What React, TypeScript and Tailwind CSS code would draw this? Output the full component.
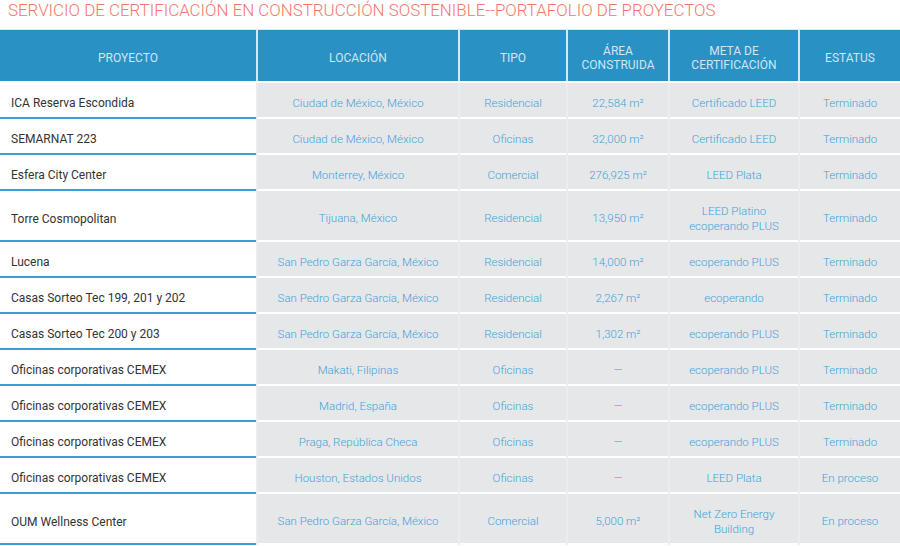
import React from 'react'

type Row = {
  proyecto: string
  locacion: string
  tipo: string
  area: string
  meta: string[]
  estatus: string
  tall?: boolean
}

const rows: Row[] = [
  { proyecto: 'ICA Reserva Escondida', locacion: 'Ciudad de México, México', tipo: 'Residencial', area: '22,584 m²', meta: ['Certificado LEED'], estatus: 'Terminado' },
  { proyecto: 'SEMARNAT 223', locacion: 'Ciudad de México, México', tipo: 'Oficinas', area: '32,000 m²', meta: ['Certificado LEED'], estatus: 'Terminado' },
  { proyecto: 'Esfera City Center', locacion: 'Monterrey, México', tipo: 'Comercial', area: '276,925 m²', meta: ['LEED Plata'], estatus: 'Terminado' },
  { proyecto: 'Torre Cosmopolitan', locacion: 'Tijuana, México', tipo: 'Residencial', area: '13,950 m²', meta: ['LEED Platino', 'ecoperando PLUS'], estatus: 'Terminado', tall: true },
  { proyecto: 'Lucena', locacion: 'San Pedro Garza García, México', tipo: 'Residencial', area: '14,000 m²', meta: ['ecoperando PLUS'], estatus: 'Terminado' },
  { proyecto: 'Casas Sorteo Tec 199, 201 y 202', locacion: 'San Pedro Garza García, México', tipo: 'Residencial', area: '2,267 m²', meta: ['ecoperando'], estatus: 'Terminado' },
  { proyecto: 'Casas Sorteo Tec 200 y 203', locacion: 'San Pedro Garza García, México', tipo: 'Residencial', area: '1,302 m²', meta: ['ecoperando PLUS'], estatus: 'Terminado' },
  { proyecto: 'Oficinas corporativas CEMEX', locacion: 'Makati, Filipinas', tipo: 'Oficinas', area: '—', meta: ['ecoperando PLUS'], estatus: 'Terminado' },
  { proyecto: 'Oficinas corporativas CEMEX', locacion: 'Madrid, España', tipo: 'Oficinas', area: '—', meta: ['ecoperando PLUS'], estatus: 'Terminado' },
  { proyecto: 'Oficinas corporativas CEMEX', locacion: 'Praga, República Checa', tipo: 'Oficinas', area: '—', meta: ['ecoperando PLUS'], estatus: 'Terminado' },
  { proyecto: 'Oficinas corporativas CEMEX', locacion: 'Houston, Estados Unidos', tipo: 'Oficinas', area: '—', meta: ['LEED Plata'], estatus: 'En proceso' },
  { proyecto: 'OUM Wellness Center', locacion: 'San Pedro Garza García, México', tipo: 'Comercial', area: '5,000 m²', meta: ['Net Zero Energy', 'Building'], estatus: 'En proceso', tall: true },
]

const headers: string[][] = [
  ['PROYECTO'],
  ['LOCACIÓN'],
  ['TIPO'],
  ['ÁREA', 'CONSTRUIDA'],
  ['META DE', 'CERTIFICACIÓN'],
  ['ESTATUS'],
]

const cols = 'grid grid-cols-[256px_200px_106px_100px_128px_100px] gap-x-[2px]'

function Cell({ children }: { children: React.ReactNode }) {
  return (
    <div className="flex flex-col items-center justify-center bg-[#e6e7e8] border-b-2 border-white pt-[6px] text-center text-[11.5px] font-light leading-[15px] text-[#42a3d9]">
      {children}
    </div>
  )
}

export default function App() {
  return (
    <div className="w-[900px] h-[546px] overflow-hidden bg-white font-['Roboto',sans-serif]">
      <h1 className="h-[29px] pl-[8px] text-[16.9px] font-light leading-[20px] text-[#f4776c]">
        SERVICIO DE CERTIFICACIÓN EN CONSTRUCCIÓN SOSTENIBLE--PORTAFOLIO DE PROYECTOS
      </h1>
      <div className="border-t border-[#d5e9f4]">
        <div className={`${cols} h-[51px] bg-[#d5e9f4]`}>
          {headers.map((h, i) => (
            <div
              key={i}
              className="flex flex-col items-center justify-center bg-[#2a91c4] pt-[4px] text-center text-[12px] leading-[14px] text-[#cfe6f3]"
            >
              {h.map((line) => (
                <span key={line}>{line}</span>
              ))}
            </div>
          ))}
        </div>
        <div className="h-[2px]" />
        {rows.map((r, i) => (
          <div
            key={i}
            className={`${cols} bg-[#ececed] ${r.tall ? 'h-[51px]' : 'h-[36px]'}`}
          >
            <div className="flex items-center bg-white border-b-2 border-[#3a9fd5] pl-[11px] pt-[6px] text-[12px] text-[#333333]">
              {r.proyecto}
            </div>
            <Cell>{r.locacion}</Cell>
            <Cell>{r.tipo}</Cell>
            <Cell>{r.area}</Cell>
            <Cell>
              {r.meta.map((m) => (
                <span key={m}>{m}</span>
              ))}
            </Cell>
            <Cell>{r.estatus}</Cell>
          </div>
        ))}
      </div>
    </div>
  )
}
